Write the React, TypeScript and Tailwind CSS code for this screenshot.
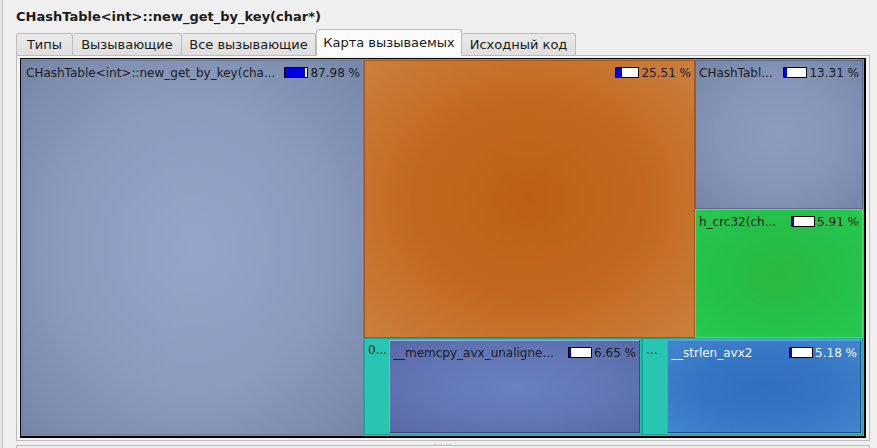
import React from 'react';

type NodeProps = {
  label?: string;
  pct?: string;
  fill?: number;
  className: string;
  textClass?: string;
  children?: React.ReactNode;
};

function Bar({ fill }: { fill: number }) {
  return (
    <div className="w-[24px] h-[11px] border border-black bg-white flex-shrink-0 flex">
      <div className="h-full bg-[#0000e6]" style={{ width: `${Math.max(fill * 100, 8)}%` }} />
    </div>
  );
}

function Label({ label, pct, fill, textClass }: { label?: string; pct?: string; fill?: number; textClass?: string }) {
  return (
    <div className={`flex items-center gap-[2px] px-[3px] pt-[4px] h-[19px] text-[12px] leading-[14px] whitespace-nowrap ${textClass ?? 'text-[#1b1b1b]'}`}>
      <span className="flex-1 min-w-0 overflow-hidden">{label}</span>
      {pct && (
        <>
          <Bar fill={fill ?? 0} />
          <span>{pct}</span>
        </>
      )}
    </div>
  );
}

function Node({ label, pct, fill, className, textClass, children }: NodeProps) {
  return (
    <div className={`flex flex-col overflow-hidden ${className}`}>
      {(label || pct) && <Label label={label} pct={pct} fill={fill} textClass={textClass} />}
      {children}
    </div>
  );
}

const TABS = ['Типы', 'Вызывающие', 'Все вызывающие', 'Карта вызываемых', 'Исходный код'];
const TAB_W = ['w-[57px]', 'w-[109px]', 'w-[134px]', 'w-[146px]', 'w-[114px]'];

export default function App() {
  return (
    <div
      className="w-[877px] h-[448px] bg-[#efefef] flex overflow-hidden text-[#1b1b1b]"
      style={{ fontFamily: '"DejaVu Sans", "Noto Sans", sans-serif' }}
    >
      {/* left splitter edge */}
      <div className="w-[3px] h-full border-r border-[#c4c4c4] bg-[#e6e6e6]" />

      <div className="flex-1 flex flex-col pl-[13px] pr-[7px]">
        <div className="h-[18px] mt-[8px] text-[13px] font-bold leading-[18px]">
          CHashTable&lt;int&gt;::new_get_by_key(char*)
        </div>

        {/* tabs */}
        <div className="flex items-end h-[30px] relative z-10 -mb-[1px]">
          {TABS.map((t, i) => {
            const active = i === 3;
            return (
              <div
                key={t}
                className={`${TAB_W[i]} flex items-center justify-center text-[13px] border border-[#bcbcbc] rounded-t-[3px] ${
                  active
                    ? 'h-[27px] bg-[#fbfbfb] border-b-[#fbfbfb]'
                    : 'h-[23px] bg-gradient-to-b from-[#eaeaea] to-[#dedede] border-l-0 first:border-l'
                } ${i === 4 ? 'border-l-0' : ''}`}
              >
                {t}
              </div>
            );
          })}
        </div>

        {/* panel */}
        <div className="h-[386px] border border-[#bcbcbc] bg-[#f4f4f4] px-[3px] pt-[2px]">
          <div className="h-[380px] border-2 border-black border-t-[1px] border-l-[1px] bg-[#7f8fb0] p-[1px] flex">
            {/* root self area */}
            <Node
              label="CHashTable<int>::new_get_by_key(cha..."
              pct="87.98 %"
              fill={0.88}
              className="w-[342px] h-full border border-[#6e7d9c] bg-[radial-gradient(ellipse_at_center,#95a5c9_0%,#8a9bbe_55%,#7686a8_100%)]"
            />
            <div className="flex-1 flex flex-col">
              <div className="h-[278px] flex">
                <Node
                  pct="25.51 %"
                  fill={0.255}
                  className="w-[331px] h-full border border-[#a85412] bg-[radial-gradient(ellipse_at_center,#bd6014_0%,#c2681e_50%,#cb803f_100%)]"
                />
                <div className="flex-1 flex flex-col">
                  <Node
                    label="CHashTabl..."
                    pct="13.31 %"
                    fill={0.133}
                    className="h-[149px] border border-[#5d6b8a] bg-[radial-gradient(ellipse_at_center,#8c9cbf_0%,#8595b7_55%,#7585a7_100%)]"
                  />
                  <Node
                    label="h_crc32(ch..."
                    pct="5.91 %"
                    fill={0.06}
                    className="flex-1 border border-[#4fe070] bg-[radial-gradient(ellipse_at_center,#2cb73e_0%,#23c04a_55%,#28c950_100%)]"
                  />
                </div>
              </div>
              <div className="flex-1 flex">
                <div className="w-[278px] h-full border border-[#1aa898] bg-[#28c6b2] flex">
                  <div className="w-[23px] px-[3px] pt-[4px] text-[12px] leading-[14px] overflow-hidden whitespace-nowrap">0...</div>
                  <Node
                    label="__memcpy_avx_unaligne..."
                    pct="6.65 %"
                    fill={0.07}
                    className="flex-1 m-[1px] border border-[#9aa8e0] border-r-[#3a4780] border-b-[#3a4780] bg-[radial-gradient(ellipse_at_center,#6a80c2_0%,#6276b6_55%,#5768a6_100%)]"
                  />
                </div>
                <div className="flex-1 h-full border border-[#1aa898] bg-[#28c6b2] flex">
                  <div className="w-[23px] px-[3px] pt-[4px] text-[12px] leading-[14px] overflow-hidden whitespace-nowrap">...</div>
                  <Node
                    label="__strlen_avx2"
                    pct="5.18 %"
                    fill={0.05}
                    textClass="text-[#f4f6ff]"
                    className="flex-1 m-[1px] border border-[#5f9ae0] border-r-[#1d4f90] border-b-[#1d4f90] bg-[radial-gradient(ellipse_at_center,#2f6fbf_0%,#3677c5_55%,#4286cf_100%)]"
                  />
                </div>
              </div>
            </div>
          </div>
        </div>

        {/* bottom splitter */}
        <div className="h-[4px] flex justify-center items-center">
          <div className="text-[6px] leading-[4px] text-[#9a9a9a] tracking-[1px]">......</div>
        </div>
        <div className="flex-1 border border-[#bcbcbc] border-b-0" />
      </div>
    </div>
  );
}
